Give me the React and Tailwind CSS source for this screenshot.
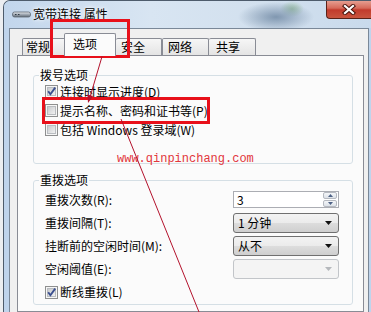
import React from "react";

function Check({ checked }) {
  return (
    <svg width="13" height="13" viewBox="0 0 13 13" className="shrink-0">
      <defs>
        <linearGradient id="cbg" x1="0" y1="0" x2="1" y2="1">
          <stop offset="0" stopColor="#c6c8cb" />
          <stop offset="1" stopColor="#f4f4f4" />
        </linearGradient>
      </defs>
      <rect x="0.5" y="0.5" width="12" height="12" fill="#f6f6f6" stroke="#8e8f8f" />
      <rect x="2.5" y="2.5" width="8" height="8" fill="url(#cbg)" stroke="#b9bcc0" />
      {checked && (
        <path d="M3.2 6.2 L5.4 9.2 L10.2 2.6" fill="none" stroke="#3b4f8f" strokeWidth="1.9" />
      )}
    </svg>
  );
}

function CheckRow({ checked, children }) {
  return (
    <div className="h-[19px] flex items-center gap-[2px]">
      <Check checked={checked} />
      <span className="leading-[14px] whitespace-nowrap">{children}</span>
    </div>
  );
}

function Arrow({ color }) {
  return (
    <svg width="7" height="4" viewBox="0 0 7 4">
      <polygon points="0,0 7,0 3.5,4" fill={color} />
    </svg>
  );
}

function Combo({ text, disabled }) {
  return (
    <div
      className={`w-[106px] h-[20px] rounded-[3px] border flex items-center justify-between pl-[4px] pr-[6px] ${
        disabled
          ? "border-[#c2c5c9] bg-[#f4f4f4]"
          : "border-[#707070] bg-[linear-gradient(#f3f3f3_0%,#ebebeb_50%,#dddddd_50%,#cfcfcf_100%)]"
      }`}
    >
      <span className="leading-[14px] whitespace-nowrap">{text}</span>
      <Arrow color={disabled ? "#b5b8bc" : "#111"} />
    </div>
  );
}

function Spin() {
  return (
    <div className="w-[106px] h-[17px] border border-[#abadb3] bg-white flex items-stretch">
      <span className="flex-1 pl-[3px] leading-[15px]">3</span>
      <div className="w-[15px] flex flex-col gap-[1px] py-[0px] pr-[1px]">
        <div className="flex-1 border border-[#b5b9c0] rounded-[2px] bg-[linear-gradient(#f4f6f8,#dde2e8)] flex items-center justify-center">
          <svg width="5" height="3" viewBox="0 0 5 3">
            <polygon points="0,3 5,3 2.5,0" fill="#4d6185" />
          </svg>
        </div>
        <div className="flex-1 border border-[#b5b9c0] rounded-[2px] bg-[linear-gradient(#f4f6f8,#dde2e8)] flex items-center justify-center">
          <svg width="5" height="3" viewBox="0 0 5 3">
            <polygon points="0,0 5,0 2.5,3" fill="#4d6185" />
          </svg>
        </div>
      </div>
    </div>
  );
}

function Row({ label, children }) {
  return (
    <div className="h-[23px] flex items-center justify-between">
      <span className="leading-[14px] whitespace-nowrap">{label}</span>
      {children}
    </div>
  );
}

export default function App() {
  return (
    <div className="w-[371px] h-[312px] overflow-hidden relative bg-[#eceef1] font-['Noto_Sans_CJK_SC',sans-serif] text-[12px] text-black">
      <div className="ml-[3px] h-[312px] flex flex-col border-l border-t border-[#4e5c6c] rounded-tl-[7px] bg-[#bfd4ec] overflow-hidden">
        {/* title bar */}
        <div className="h-[27px] shrink-0 flex items-start bg-[image:radial-gradient(ellipse_38px_15px_at_272px_16px,#8097b0,transparent),radial-gradient(ellipse_12px_8px_at_288px_8px,#9cc0a4,transparent),linear-gradient(90deg,#c2d6ec,#d8e5f2_40%,#d2e0ee_70%,#c9daec)]">
          <div className="flex items-center h-[26px] pl-[8px] gap-[2px]">
            <svg width="19" height="10" viewBox="0 0 19 10">
              <defs>
                <linearGradient id="ico" x1="0" y1="0" x2="0" y2="1">
                  <stop offset="0" stopColor="#e9edf1" />
                  <stop offset="0.5" stopColor="#9ea7b1" />
                  <stop offset="1" stopColor="#5f6a76" />
                </linearGradient>
              </defs>
              <rect x="0.5" y="3" width="18" height="5" rx="2" fill="url(#ico)" stroke="#5d6772" strokeWidth="0.8" />
              <rect x="3" y="5" width="1.5" height="1" fill="#2f3a45" />
              <rect x="6" y="5" width="1.5" height="1" fill="#2f3a45" />
            </svg>
            <span className="leading-[16px] whitespace-nowrap [text-shadow:0_0_6px_#ffffff,0_0_3px_#ffffff]">
              宽带连接 属性
            </span>
          </div>
          <div className="ml-auto -mt-[1px] w-[45px] h-[19px] rounded-bl-[4px] border border-t-0 border-r-0 border-[#5a2218] bg-[linear-gradient(#e8a597_0%,#d66a5a_45%,#c23b2c_55%,#c9553f_100%)] flex items-center justify-center">
            <svg width="14" height="11" viewBox="0 0 14 11">
              <path d="M3 2 L11 9 M11 2 L3 9" stroke="#4a140c" strokeWidth="4.2" strokeLinecap="square" />
              <path d="M3 2 L11 9 M11 2 L3 9" stroke="#ffffff" strokeWidth="2.2" strokeLinecap="square" />
            </svg>
          </div>
        </div>

        {/* body */}
        <div className="flex-1 flex pl-[5px] min-h-0">
          <div className="flex-1 border-l border-t border-[#7a8898] bg-[#f0f0f0] flex flex-col min-h-0">
            {/* tabs */}
            <div className="h-[26px] shrink-0 flex items-end pl-[12px]">
              <div className="w-[44px] h-[17px] border border-b-0 border-[#898c95] rounded-t-[2px] bg-[linear-gradient(#f6f6f6,#e4e4e4)] flex items-center pl-[3px]">
                <span className="leading-[14px]">常规</span>
              </div>
              <div className="relative z-10 -ml-[2px] -mb-[1px] w-[52px] h-[23px] border border-b-0 border-[#898c95] rounded-t-[2px] bg-[#fbfbfb] flex items-center pl-[8px] pb-[2px]">
                <span className="leading-[14px]">选项</span>
              </div>
              <div className="w-[46px] h-[17px] border border-b-0 border-l-0 border-[#898c95] rounded-t-[2px] bg-[linear-gradient(#f6f6f6,#e4e4e4)] flex items-center pl-[5px]">
                <span className="leading-[14px]">安全</span>
              </div>
              <div className="w-[47px] h-[17px] border border-b-0 border-[#898c95] rounded-t-[2px] bg-[linear-gradient(#f6f6f6,#e4e4e4)] flex items-center pl-[5px]">
                <span className="leading-[14px]">网络</span>
              </div>
              <div className="w-[47px] h-[17px] border border-b-0 border-l-0 border-[#898c95] rounded-t-[2px] bg-[linear-gradient(#f6f6f6,#e4e4e4)] flex items-center pl-[7px]">
                <span className="leading-[14px]">共享</span>
              </div>
            </div>

            {/* panel */}
            <div className="flex-1 ml-[7px] mr-[4px] border border-[#898c95] bg-[#fbfbfb] flex flex-col min-h-0">
              <fieldset className="mt-[12px] ml-[15px] mr-[10px] border border-[#d5dfe5] rounded-[3px]">
                <legend className="ml-[5px] px-[1px] leading-[14px]">拨号选项</legend>
                <div className="pl-[11px]">
                  <CheckRow checked>连接时显示进度(D)</CheckRow>
                  <CheckRow>提示名称、密码和证书等(P)</CheckRow>
                  <CheckRow>包括 Windows 登录域(W)</CheckRow>
                  <div className="h-[24px] pl-[72px] pt-[9px]">
                    <span className="font-['Liberation_Mono',monospace] text-[12px] leading-[14px] text-[#e2363c] whitespace-nowrap">
                      www.qinpinchang.com
                    </span>
                  </div>
                </div>
              </fieldset>

              <fieldset className="mt-[9px] ml-[15px] mr-[10px] border border-[#d5dfe5] rounded-[3px]">
                <legend className="ml-[5px] px-[1px] leading-[14px]">重拨选项</legend>
                <div className="pl-[11px] pr-[13px] pt-[1px]">
                  <Row label="重拨次数(R):">
                    <Spin />
                  </Row>
                  <Row label="重拨间隔(T):">
                    <Combo text="1 分钟" />
                  </Row>
                  <Row label="挂断前的空闲时间(M):">
                    <Combo text="从不" />
                  </Row>
                  <Row label="空闲阈值(E):">
                    <Combo text="" disabled />
                  </Row>
                  <div className="h-[24px] flex items-center gap-[2px]">
                    <Check checked />
                    <span className="leading-[14px]">断线重拨(L)</span>
                  </div>
                </div>
              </fieldset>
            </div>
          </div>
          <div className="w-[3px] border-l border-[#7a8898]" />
        </div>
      </div>

      {/* annotation overlay */}
      <svg className="absolute inset-0 pointer-events-none" width="371" height="312" viewBox="0 0 371 312">
        <rect x="51.5" y="20.5" width="77" height="36" fill="none" stroke="#e8101a" strokeWidth="3" />
        <rect x="43.5" y="98.5" width="165" height="24" fill="none" stroke="#e8101a" strokeWidth="3" />
        <line x1="109" y1="33" x2="90" y2="97" stroke="#b3122c" strokeWidth="1" />
        <polygon points="88,103 93.2,96.1 87.4,94.5" fill="#b3122c" />
        <line x1="121" y1="119" x2="199" y2="312" stroke="#b3122c" strokeWidth="1" />
      </svg>
    </div>
  );
}
